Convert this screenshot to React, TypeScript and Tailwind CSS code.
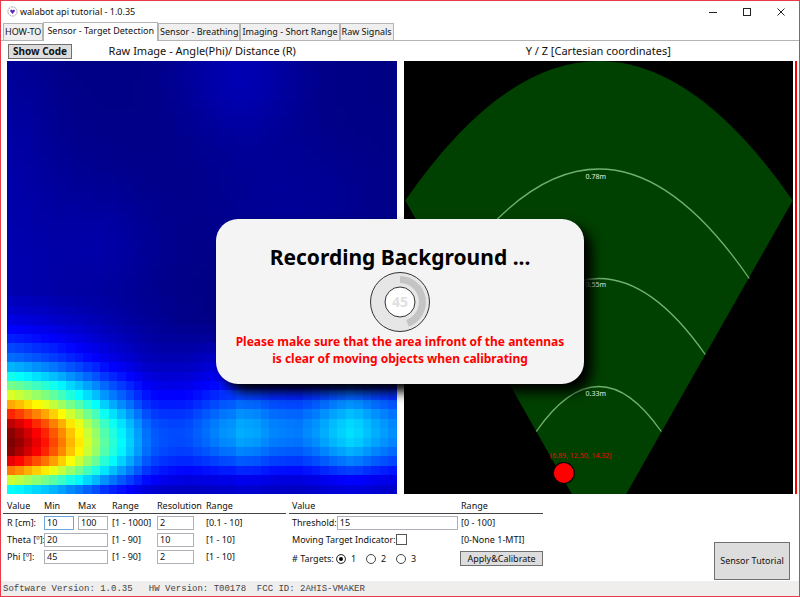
import React, { useState } from "react";

const CELLS = 46;

/* Signal strength of the near target, by distance row and by angle column. */
const nearRows: [number, number][] = [
  [0, 0], [24, 0.03], [26, 0.06], [27, 0.08], [28, 0.11], [29, 0.14], [30, 0.18], [31, 0.22], [32, 0.29],
  [33, 0.38], [34, 0.48], [35, 0.58], [36, 0.7], [37, 0.83], [38, 0.93], [39, 0.98], [40, 1],
  [41, 0.98], [42, 0.89], [43, 0.75], [44, 0.57], [45, 0.37],
];
const nearCols: [number, number][] = [
  [0, 1], [1, 0.97], [2, 0.93], [3, 0.89], [4, 0.85], [5, 0.8], [6, 0.75], [7, 0.69], [8, 0.64],
  [9, 0.58], [10, 0.53], [11, 0.46], [12, 0.41], [13, 0.36], [14, 0.31], [15, 0.26], [16, 0.21],
  [17, 0.18], [18, 0.15], [20, 0.1], [23, 0.04], [26, 0], [45, 0],
];
/* The same for the weaker echoes to the right of it. */
const farRows: [number, number][] = [
  [0, 0], [27, 0], [29, 0.08], [31, 0.25], [33, 0.42], [34, 0.52], [35, 0.64], [36, 0.78], [37, 0.9],
  [38, 0.98], [39, 1], [40, 0.96], [41, 0.86], [42, 0.72], [43, 0.54], [44, 0.36], [45, 0.26],
];
const farCols: [number, number][] = [
  [0, 0], [12, 0], [15, 0.02], [17, 0.03], [19, 0.07], [21, 0.12], [23, 0.19], [25, 0.25], [27, 0.29],
  [29, 0.28], [31, 0.25], [34, 0.24], [36, 0.27], [38, 0.31], [40, 0.34], [41, 0.33], [43, 0.29], [45, 0.26],
];

function sample(points: [number, number][], at: number) {
  for (let i = 1; i < points.length; i++) {
    const [x1, y1] = points[i];
    if (at <= x1) {
      const [x0, y0] = points[i - 1];
      return y0 + ((y1 - y0) * (at - x0)) / (x1 - x0);
    }
  }
  return points[points.length - 1][1];
}

const bump = (c: number, r: number, c0: number, r0: number, w: number, h: number) =>
  Math.exp(-(((c - c0) / w) ** 2) - ((r - r0) / h) ** 2);

function strength(c: number, r: number) {
  const haze =
    0.005 +
    0.045 * bump(c, r, 27, 1, 7, 7) +
    0.022 * bump(c, r, 11, 19, 6, 6) +
    0.02 * bump(c, r, 0, 8, 5, 22) +
    0.018 * bump(c, r, 33, 14, 10, 6);
  return Math.min(1, haze + sample(nearRows, r) * sample(nearCols, c) + sample(farRows, r) * sample(farCols, c));
}

function jet(v: number) {
  const ch = (center: number) =>
    Math.round(255 * Math.max(0, Math.min(1, 1.5 - Math.abs(4 * v - center))));
  return `rgb(${ch(3)},${ch(2)},${ch(1)})`;
}

function HeatMap() {
  const cells = [];
  for (let r = 0; r < CELLS; r++)
    for (let c = 0; c < CELLS; c++)
      cells.push(<rect key={r * CELLS + c} x={c} y={r} width="1" height="1" fill={jet(strength(c, r))} />);
  return (
    <svg viewBox="0 0 46 46" preserveAspectRatio="none" shapeRendering="crispEdges" className="block h-full w-full" role="img" aria-label="Raw image">
      {cells}
    </svg>
  );
}

function FanPlot() {
  return (
    <svg viewBox="0 0 390 433" preserveAspectRatio="xMidYMid slice" className="block h-full w-full bg-black" role="img" aria-label="Cartesian plot">
      <path d="M1.5 139.5Q195 -139.5 389 139.5L222.500 433H168Z" fill="#004000" />
      <g fill="none" stroke="#6fb06f" strokeWidth="1.300">
        <path d="M45 217.500Q195 -1.500 345.500 217.500" />
        <path d="M89 293.500Q195 141.500 301.500 293.500" />
        <path d="M132.500 370.500Q195 280.500 257.500 370.500" />
      </g>
      <g fill="#e6efe6" fontSize="7" textAnchor="middle">
        <text x="192" y="118">0.78m</text>
        <text x="192" y="226">0.55m</text>
        <text x="192" y="335">0.33m</text>
      </g>
      <text x="177" y="397" fill="#e01000" fontSize="7" textAnchor="middle">(6.89, 12.50, 14.32)</text>
      <circle cx="160" cy="412" r="10.500" fill="#f00" stroke="#000" strokeWidth="1.200" />
    </svg>
  );
}

const tabs = ["HOW-TO", "Sensor - Target Detection", "Sensor - Breathing", "Imaging - Short Range", "Raw Signals"];

function Tabs() {
  const [active, setActive] = useState(1);
  return (
    <div role="tablist" className="flex h-[19px] items-end border-b border-[#b4b4b4] pl-[2px] text-[9px]">
      {tabs.map((tab, i) => (
        <button
          key={tab}
          role="tab"
          aria-selected={i === active}
          onClick={() => setActive(i)}
          className={
            i === active
              ? "-mb-px h-[19px] border border-b-0 border-[#b4b4b4] bg-white px-[3px] pb-[2px] whitespace-nowrap"
              : "h-[17px] border border-b-0 border-[#b4b4b4] bg-[#efefef] px-px whitespace-nowrap"
          }
        >
          {tab}
        </button>
      ))}
    </div>
  );
}

function Field({ id, label, value, className = "", border = "border-[#b0b0b8]" }: { id: string; label: string; value: string; className?: string; border?: string }) {
  return (
    <input
      id={id}
      aria-label={label}
      defaultValue={value}
      className={`h-[14px] min-w-0 border bg-white px-[2px] text-[9px] leading-3 outline-none ${border} ${className}`}
    />
  );
}

function SweepSettings() {
  return (
    <div className="w-[283px]">
      <div className="grid h-[17px] grid-cols-[37px_34px_34px_45px_49px_1fr] items-end border-b border-[#444] pb-px pl-1">
        <span>Value</span><span>Min</span><span>Max</span><span>Range</span><span>Resolution</span><span>Range</span>
      </div>
      <div className="grid auto-rows-[17px] grid-cols-[37px_34px_34px_45px_49px_1fr] items-center pl-1 whitespace-nowrap">
        <label htmlFor="r-min">R [cm]:</label>
        <Field id="r-min" label="R minimum" value="10" className="mr-1" border="border-[#6ba5e0]" />
        <Field id="r-max" label="R maximum" value="100" className="mr-1" />
        <span>[1 - 1000]</span>
        <Field id="r-res" label="R resolution" value="2" className="mr-3" />
        <span>[0.1 - 10]</span>
        <label htmlFor="theta">Theta [º]:</label>
        <Field id="theta" label="Theta" value="20" className="col-span-2 mr-1" />
        <span>[1 - 90]</span>
        <Field id="theta-res" label="Theta resolution" value="10" className="mr-3" />
        <span>[1 - 10]</span>
        <label htmlFor="phi">Phi [º]:</label>
        <Field id="phi" label="Phi" value="45" className="col-span-2 mr-1" />
        <span>[1 - 90]</span>
        <Field id="phi-res" label="Phi resolution" value="2" className="mr-3" />
        <span>[1 - 10]</span>
      </div>
    </div>
  );
}

function TargetSettings() {
  return (
    <div className="w-[254px]">
      <div className="grid h-[17px] grid-cols-[169px_1fr] items-end border-b border-[#444] pb-px pl-[3px]">
        <span>Value</span><span>Range</span>
      </div>
      <div className="grid auto-rows-[17px] grid-cols-[169px_1fr] items-center pl-[3px] whitespace-nowrap">
        <div className="flex items-center pr-[3px]">
          <label htmlFor="threshold">Threshold:</label>
          <Field id="threshold" label="Threshold" value="15" className="flex-1" />
        </div>
        <span>[0 - 100]</span>
        <div className="flex items-center">
          <label htmlFor="mti">Moving Target Indicator:</label>
          <input id="mti" type="checkbox" className="size-[11px] appearance-none border border-[#555] bg-white checked:bg-[#555]" />
        </div>
        <span>[0-None 1-MTI]</span>
      </div>
      <div className="flex items-center pt-[3px] pl-[3px]">
        <div role="radiogroup" aria-label="# Targets" className="flex w-[168px] items-center">
          <span className="w-11"># Targets:</span>
          {["1", "2", "3"].map((n) => (
            <label key={n} className="flex w-[30px] items-center gap-[5px]">
              <input
                type="radio"
                name="targets"
                defaultChecked={n === "1"}
                className="size-[10px] appearance-none rounded-full border border-[#444] bg-white checked:bg-black checked:shadow-[inset_0_0_0_2px_white]"
              />
              {n}
            </label>
          ))}
        </div>
        <button className="h-[15px] flex-1 border border-[#707070] bg-[#ddd] text-[9px] leading-3">Apply&amp;Calibrate</button>
      </div>
    </div>
  );
}

function RecordingDialog() {
  return (
    <div className="pointer-events-none absolute inset-0 flex items-center justify-center pt-[5px]">
      <div role="dialog" aria-labelledby="rec-title" className="flex w-[368px] flex-col items-center rounded-[22px] bg-[#f4f4f4] pt-6 pb-[17px] text-center font-bold shadow-[8px_8px_12px_#000]">
        <h1 id="rec-title" className="text-[21px] leading-7 text-black">Recording Background ...</h1>
        <svg viewBox="0 0 62 62" className="size-[62px]" role="img" aria-label="45 seconds left">
          <circle cx="31" cy="31" r="29.500" fill="#e6e6e6" stroke="#333" />
          <path d="M31 8.500A22.500 22.500 0 0 1 38.500 52.200" fill="none" stroke="#c4c4c4" strokeWidth="7" />
          <circle cx="31" cy="31" r="15" fill="#fff" stroke="#333" />
          <text x="31" y="36" fill="#e0e0e0" fontSize="14" textAnchor="middle">45</text>
        </svg>
        <p className="text-[12px] leading-[17px] text-[#f00]">
          Please make sure that the area infront of the antennas
          <br />
          is clear of moving objects when calibrating
        </p>
      </div>
    </div>
  );
}

export default function App() {
  return (
    <div className="relative flex min-h-screen flex-col border border-[#e83a48] bg-white font-['Noto_Sans','Open_Sans',sans-serif] text-[9px] leading-3 text-[#111]">
      <header className="flex h-[21px] items-center pl-[6px]">
        <svg viewBox="0 0 11 11" className="size-[11px]" aria-hidden="true">
          <circle cx="5.500" cy="5.500" r="4.600" fill="#fff" stroke="#888" strokeWidth=".8" strokeDasharray="2 .8" />
          <path d="M5.500 8L3.200 5.200Q3 3.500 4.300 3.600L5.500 4.400L6.700 3.600Q8 3.500 7.800 5.200Z" fill="#5a1fc0" />
        </svg>
        <span className="ml-[2px]">walabot api tutorial - 1.0.35</span>
        <div className="ml-auto flex items-center gap-6 pr-[13px]">
          <button aria-label="Minimize">
            <svg viewBox="0 0 10 10" className="block size-[10px]" fill="none" stroke="#222"><path d="M1 5.500H9" /></svg>
          </button>
          <button aria-label="Maximize">
            <svg viewBox="0 0 10 10" className="block size-[10px]" fill="none" stroke="#222"><rect x="1.500" y="1.500" width="7" height="7" /></svg>
          </button>
          <button aria-label="Close">
            <svg viewBox="0 0 10 10" className="block size-[10px]" fill="none" stroke="#222"><path d="M1.500 1.500L8.500 8.500M8.500 1.500L1.500 8.500" /></svg>
          </button>
        </div>
      </header>

      <Tabs />

      <main className="flex flex-1 flex-col">
        <div className="flex h-5 items-center gap-[7px] pr-[6px] pl-[6px] text-[11px]">
          <div className="flex flex-1 items-center">
            <div className="flex flex-1 items-center pl-px">
              <button className="h-[15px] w-16 border border-[#707070] bg-[#ddd] text-[10px] leading-3 font-bold">Show Code</button>
            </div>
            <h2>Raw Image - Angle(Phi)/ Distance (R)</h2>
            <div className="flex-1" />
          </div>
          <h2 className="flex-1 text-center">Y / Z [Cartesian coordinates]</h2>
        </div>
        <div className="flex h-[433px] pr-[2px] pl-[6px]">
          <div className="flex-1"><HeatMap /></div>
          <div className="ml-[7px] flex-1"><FanPlot /></div>
          <div className="ml-[2px] w-[2px] bg-[#f00]" />
        </div>
        <div className="flex flex-1 gap-[3px] pt-[3px] pr-[9px] pb-px pl-[2px]">
          <SweepSettings />
          <TargetSettings />
          <button className="ml-auto h-[38px] w-[76px] self-end border border-[#707070] bg-[#ddd] text-[9px]">Sensor Tutorial</button>
        </div>
      </main>

      <footer className="h-[15px] bg-[#f0eded] pl-[2px] font-['Liberation_Mono',monospace] text-[9px] leading-4 whitespace-pre text-[#444]">
        {"Software Version: 1.0.35   HW Version: T00178  FCC ID: 2AHIS-VMAKER"}
      </footer>

      <RecordingDialog />
    </div>
  );
}
